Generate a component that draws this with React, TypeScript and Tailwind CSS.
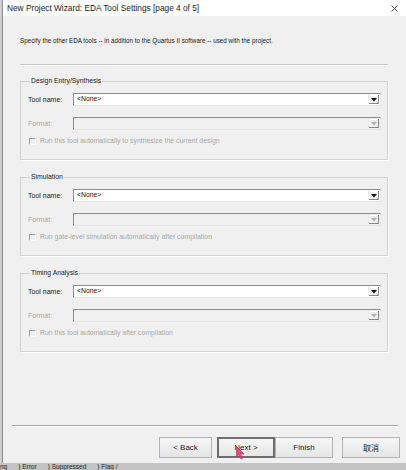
import React from 'react';

const font = { fontFamily: '"Liberation Sans", Arial, sans-serif' };

function Arrow({ disabled }: { disabled?: boolean }) {
  return (
    <div className="w-[11px] h-full bg-[#f0f0f0] border-l border-[#e8e8e8] flex items-center justify-center shadow-[inset_-1px_-1px_0_#8a8a8a,inset_1px_1px_0_#ffffff]">
      <svg width="6" height="4" viewBox="0 0 6 4">
        <path d="M0 0 L6 0 L3 3.5 Z" fill={disabled ? '#b0b0b0' : '#111111'} />
      </svg>
    </div>
  );
}

function Combo({ value, disabled }: { value?: string; disabled?: boolean }) {
  return (
    <div
      className={`flex-1 h-[13px] flex items-stretch border-t border-l border-[#8c8c8c] border-b border-r border-b-[#e6e6e6] border-r-[#e6e6e6] p-[1px] ${
        disabled ? 'bg-[#f0f0f0]' : 'bg-white'
      }`}
    >
      <div className="flex-1 flex items-center pl-[2px] text-[6.8px] leading-none text-[#111]">{value}</div>
      <Arrow disabled={disabled} />
    </div>
  );
}

function Group({ title, check }: { title: string; check: string }) {
  return (
    <fieldset className="border border-[#d3d3d3] shadow-[1px_1px_0_#ffffff] ml-[17px] mr-[18px] pl-[7px] pr-[6px] pb-[14px]">
      <legend className="ml-[2px] px-[1px] text-[6.8px] leading-[8px] text-[#1a1a1a]">{title}</legend>
      <div className="flex items-center mt-[8px]">
        <span className="w-[45px] text-[7px] leading-none text-[#1a1a1a]">Tool name:</span>
        <Combo value="<None>" />
      </div>
      <div className="flex items-center mt-[11px]">
        <span className="w-[45px] text-[7px] leading-none text-[#a9a9a9]">Format:</span>
        <Combo disabled />
      </div>
      <div className="flex items-center mt-[7px] pl-[1px] h-[8px]">
        <div className="w-[7px] h-[7px] border-t border-l border-[#a0a0a0] border-b border-r border-b-[#ffffff] border-r-[#ffffff] bg-[#f0f0f0]" />
        <span className="ml-[4px] text-[6.9px] leading-none text-[#a9a9a9]">{check}</span>
      </div>
    </fieldset>
  );
}

function Btn({ label, w, focus, cjk }: { label: string; w: string; focus?: boolean; cjk?: boolean }) {
  return (
    <div
      className={`${w} h-[21px] flex items-center justify-center bg-gradient-to-b from-[#f6f6f6] to-[#e6e6e6] text-[8px] text-[#222] ${
        focus ? 'border-2 border-[#6e6e6e]' : 'border border-[#b4b4b4]'
      }`}
      style={cjk ? { fontFamily: '"Noto Sans CJK SC", sans-serif' } : undefined}
    >
      {label}
    </div>
  );
}

export default function App() {
  return (
    <div className="w-[406px] h-[470px] relative overflow-hidden bg-[#c4c4c4] flex flex-col" style={font}>
      <div className="flex-1 flex min-h-0">
        <div className="w-[3px] bg-[#d2d2d2] border-r border-[#9a9a9a]" />
        <div className="flex-1 flex flex-col shadow-[0_1px_2px_#777]">
          <div className="h-[16px] bg-white flex items-center justify-between pl-[4px] pr-[8px]">
            <span className="text-[8.3px] leading-none text-[#222]">New Project Wizard: EDA Tool Settings [page 4 of 5]</span>
            <svg width="7" height="7" viewBox="0 0 7 7">
              <path d="M0.5 0.5 L6.5 6.5 M6.5 0.5 L0.5 6.5" stroke="#333" strokeWidth="0.9" />
            </svg>
          </div>
          <div className="flex-1 bg-[#f0f0f0] flex flex-col">
            <p className="mt-[21px] ml-[17px] text-[6.3px] leading-[8px] text-[#222]">
              Specify the other EDA tools -- in addition to the Quartus II software -- used with the project.
            </p>
            <div className="mt-[19px] ml-[17px] mr-[18px] h-[2px] border-t border-[#c8c8c8] border-b border-b-white" />
            <div className="mt-[11px] flex flex-col gap-[13px]">
              <Group title="Design Entry/Synthesis" check="Run this tool automatically to synthesize the current design" />
              <Group title="Simulation" check="Run gate-level simulation automatically after compilation" />
              <Group title="Timing Analysis" check="Run this tool automatically after compilation" />
            </div>
            <div className="flex-1" />
            <div className="ml-[9px] mr-[8px] h-[2px] border-t border-[#a8a8a8] border-b border-b-white" />
            <div className="mt-[10px] mb-[5px] flex justify-end pr-[6px]">
              <Btn label="< Back" w="w-[53px]" />
              <div className="w-[5px]" />
              <Btn label="Next >" w="w-[58px]" focus />
              <Btn label="Finish" w="w-[58px]" />
              <div className="w-[9px]" />
              <Btn label="取消" w="w-[58px]" cjk />
            </div>
          </div>
        </div>
      </div>
      <div className="h-[7px] bg-[#c4c4c4] overflow-hidden flex items-start">
        <div className="text-[6.5px] leading-[7px] text-[#222] whitespace-nowrap flex gap-[11px]">
          <span>nq</span>
          <span>) Error</span>
          <span>) Suppressed</span>
          <span>) Flag /</span>
        </div>
      </div>
      <svg className="absolute left-[236px] top-[446px]" width="9" height="14" viewBox="0 0 9 14">
        <path d="M0.5 0.5 L0.5 11 L3 8.5 L5 13 L6.5 12.3 L4.6 8 L8 8 Z" fill="#e8487e" stroke="#b02a5a" strokeWidth="0.6" />
      </svg>
    </div>
  );
}
